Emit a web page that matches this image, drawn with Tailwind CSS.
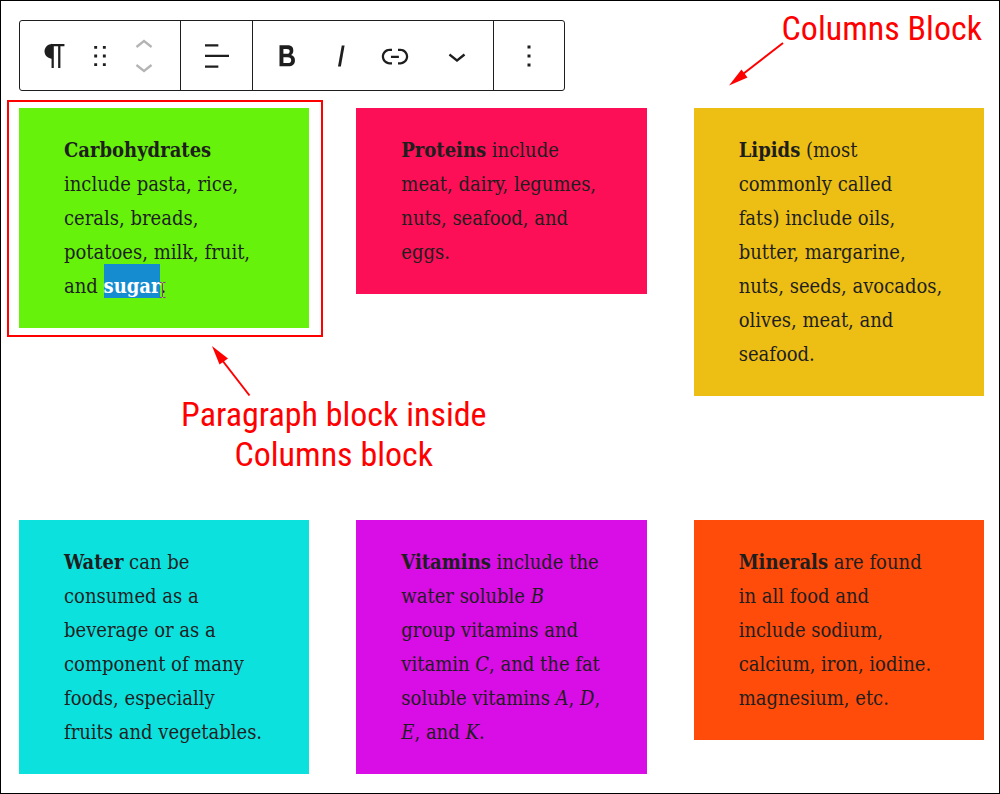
<!DOCTYPE html>
<html lang="en">
<head>
<meta charset="utf-8">
<meta name="viewport" content="width=device-width, initial-scale=1">
<title>Columns Block</title>
<script src="https://cdn.jsdelivr.net/npm/@tailwindcss/browser@4"></script>
</head>
<body class="bg-white">
<main class="relative min-h-screen border border-black pl-[18px] pr-[15px] pt-[19px] pb-[18px] text-[#1e1e1e]">

  <div role="toolbar" aria-label="Block tools" class="flex h-[71px] w-fit rounded-[3px] border border-[#1e1e1e] fill-[#1e1e1e]">
    <div class="flex w-[161px] border-r border-[#1e1e1e]">
      <button type="button" aria-label="Paragraph" class="flex w-[70px] items-center justify-center"><svg class="size-9" viewBox="0 0 24 24"><path d="M18.3 4H9.9v-.1l-.9.2c-2.3.4-4 2.4-4 4.8s1.7 4.4 4 4.8l.7.1V20h1.5V5.5h2.9V20h1.5V5.5h2.7V4z"/></svg></button>
      <button type="button" aria-label="Drag" class="flex w-5 items-center justify-center"><svg class="size-[26px] shrink-0" viewBox="0 0 18 18"><path d="M5 4h2V2H5v2zm6-2v2h2V2h-2zm-6 8h2V8H5v2zm6 0h2V8h-2v2zm-6 6h2v-2H5v2zm6 0h2v-2h-2v2z"/></svg></button>
      <div class="flex w-[68px] flex-col items-center justify-center gap-3 fill-[#b4b4b4]">
        <button type="button" aria-label="Move up"><svg class="block h-3 w-[18px]" viewBox="6 7 12 8"><path d="M6.5 12.4L12 8l5.5 4.4-.9 1.2L12 10l-4.5 3.6-1-1.2z"/></svg></button>
        <button type="button" aria-label="Move down"><svg class="block h-3 w-[18px]" viewBox="6 9 12 8"><path d="M17.5 11.6L12 16l-5.5-4.4.9-1.2L12 14l4.5-3.6 1 1.2z"/></svg></button>
      </div>
    </div>
    <button type="button" aria-label="Align text" class="flex w-[72px] items-center justify-center border-r border-[#1e1e1e]"><svg class="size-9" viewBox="0 0 24 24"><path d="M4 19.8h8.9v-1.5H4v1.5zm8.9-15.6H4v1.5h8.9V4.2zm-8.9 7v1.5h16v-1.5H4z"/></svg></button>
    <div class="flex w-[241px] border-r border-[#1e1e1e]">
      <button type="button" aria-label="Bold" class="flex w-[68px] items-center justify-center"><svg class="size-9" viewBox="0 0 24 24"><path d="M14.7 11.3c1-.6 1.5-1.6 1.5-3 0-2.3-1.3-3.4-4-3.4H7v14h5.8c1.4 0 2.5-.3 3.3-1 .8-.7 1.2-1.7 1.2-2.9.1-1.9-.8-3.1-2.6-3.7zm-5.1-4h2.3c.6 0 1.1.1 1.4.4.3.3.5.7.5 1.2s-.2 1-.5 1.2c-.3.3-.8.4-1.4.4H9.6V7.3zm4.6 9c-.4.3-1 .4-1.7.4H9.6v-3.9h2.9c.7 0 1.3.2 1.7.5.4.3.6.8.6 1.5s-.2 1.2-.6 1.5z"/></svg></button>
      <button type="button" aria-label="Italic" class="flex w-10 items-center justify-center"><svg class="size-9" viewBox="0 0 24 24"><path d="M12.5 5L10 19h1.9l2.5-14z"/></svg></button>
      <button type="button" aria-label="Link" class="flex w-[68px] items-center justify-center"><svg class="size-9" viewBox="0 0 24 24"><path d="M15.6 7.2H14v1.5h1.6c2 0 3.7 1.7 3.7 3.7s-1.7 3.7-3.7 3.7H14v1.5h1.6c2.8 0 5.2-2.3 5.2-5.2 0-2.9-2.3-5.2-5.2-5.2zM4.7 12.4c0-2 1.7-3.7 3.7-3.7H10V7.2H8.4c-2.9 0-5.2 2.3-5.2 5.2 0 2.9 2.3 5.2 5.2 5.2H10v-1.5H8.4c-2 0-3.7-1.7-3.7-3.7zm4.6.9h5.3v-1.5H9.3v1.5z"/></svg></button>
      <button type="button" aria-label="More formatting" class="flex w-14 items-center justify-center"><svg class="size-9" viewBox="0 0 24 24"><path d="M17.5 11.6L12 16l-5.5-4.4.9-1.2L12 14l4.5-3.6 1 1.2z"/></svg></button>
    </div>
    <button type="button" aria-label="Options" class="flex w-[70px] items-center justify-center"><svg class="size-9" viewBox="0 0 24 24"><path d="M13 19h-2v-2h2v2zm0-6h-2v-2h2v2zm0-6h-2V5h2v2z"/></svg></button>
  </div>

  <div class="mt-[17px] grid grid-cols-3 items-start gap-x-[47px] gap-y-[124px] whitespace-nowrap font-['DejaVu_Serif_Condensed','DejaVu_Serif',serif] text-[20px] leading-[34px]">
    <div class="relative bg-[#66f20a] px-[45px] py-[25px]">
      <div class="absolute -top-2 -right-[14px] -bottom-[9px] -left-3 border-2 border-[#ff0000]"></div>
      <p><strong>Carbohydrates</strong><br>include pasta, rice,<br>cerals, breads,<br>potatoes, milk, fruit,<br>and <span class="relative bg-[#158bd0] pt-2.5 text-white"><strong>sugar</strong><svg class="absolute -right-1.5 bottom-0 h-4 w-[7px] fill-none stroke-[#9030a0]" viewBox="0 0 7 16"><path d="M.5.5h2l1 1 1-1h2M3.5 1.5v13M.5 15.5h2l1-1 1 1h2"/></svg></span>.</p>
    </div>
    <div class="bg-[#fc0f56] px-[45px] py-[25px]">
      <p><strong>Proteins</strong> include<br>meat, dairy, legumes,<br>nuts, seafood, and<br>eggs.</p>
    </div>
    <div class="bg-[#edbf15] px-[45px] py-[25px]">
      <p><strong>Lipids</strong> (most<br>commonly called<br>fats) include oils,<br>butter, margarine,<br>nuts, seeds, avocados,<br>olives, meat, and<br>seafood.</p>
    </div>
    <div class="bg-[#0de1de] px-[45px] py-[25px]">
      <p><strong>Water</strong> can be<br>consumed as a<br>beverage or as a<br>component of many<br>foods, especially<br>fruits and vegetables.</p>
    </div>
    <div class="bg-[#d90de5] px-[45px] py-[25px]">
      <p><strong>Vitamins</strong> include the<br>water soluble <em>B</em><br>group vitamins and<br>vitamin <em>C</em>, and the fat<br>soluble vitamins <em>A</em>, <em>D</em>,<br><em>E</em>, and <em>K</em>.</p>
    </div>
    <div class="bg-[#ff4c0a] px-[45px] py-[25px]">
      <p><strong>Minerals</strong> are found<br>in all food and<br>include sodium,<br>calcium, iron, iodine.<br>magnesium, etc.</p>
    </div>
  </div>

  <!-- Callouts -->
  <div class="absolute top-[7px] right-[17px] whitespace-nowrap font-['Roboto_Condensed','Liberation_Sans_Narrow',sans-serif] text-[34px] leading-10 text-[#ff0000]">Columns Block</div>
  <svg class="absolute top-[41px] left-[727px] h-[46px] w-[58px] fill-[#ff0000] stroke-[#ff0000]" viewBox="728 42 58 46"><path stroke-width="2" d="M783 43L743 74"/><path stroke="none" d="M729 85.5L741.5 69.5L747.5 77.5z"/></svg>
  <div class="absolute top-[393px] left-[180px] text-center whitespace-nowrap font-['Roboto_Condensed','Liberation_Sans_Narrow',sans-serif] text-[34px] leading-10 text-[#ff0000]">Paragraph block inside<br>Columns block</div>
  <svg class="absolute top-[343px] left-[209px] h-[54px] w-[42px] fill-[#ff0000] stroke-[#ff0000]" viewBox="210 344 42 54"><path stroke-width="2" d="M249.5 395.5L222 360"/><path stroke="none" d="M212 346L228 358.5L219.5 364.5z"/></svg>
</main>
</body>
</html>
